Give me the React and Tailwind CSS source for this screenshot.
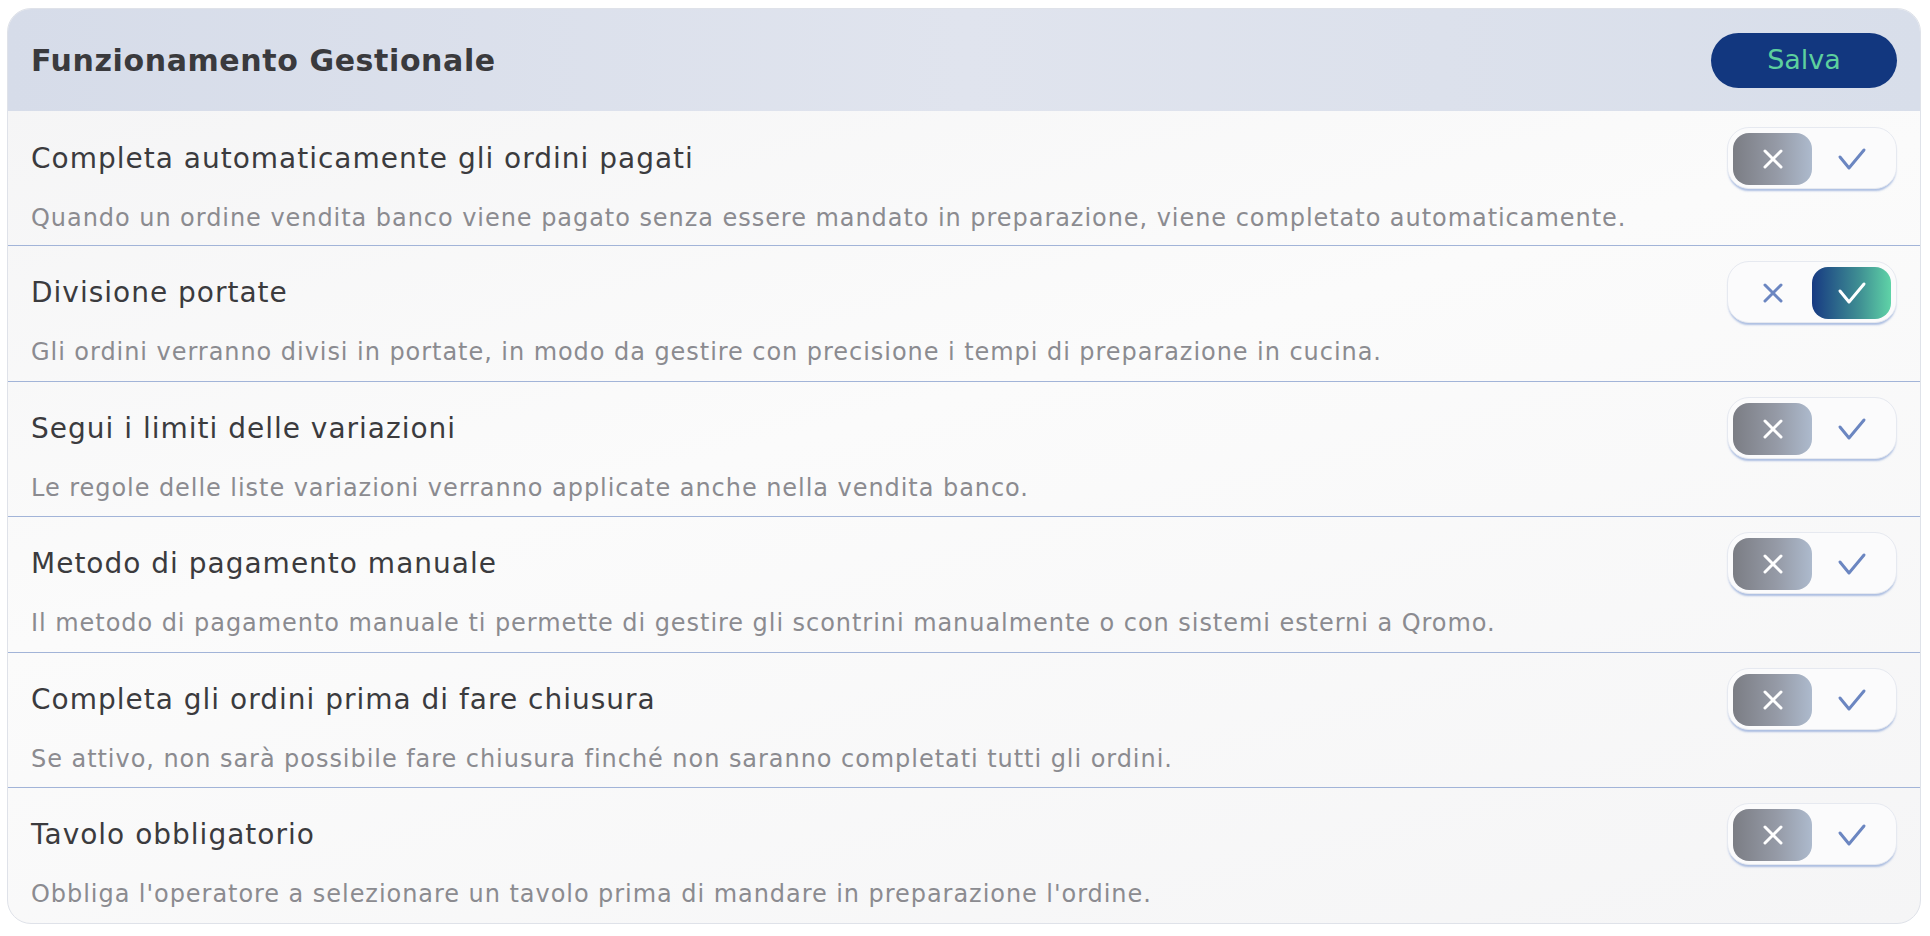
import React from 'react';

const settings = [
  {
    title: 'Completa automaticamente gli ordini pagati',
    desc: 'Quando un ordine vendita banco viene pagato senza essere mandato in preparazione, viene completato automaticamente.',
    on: false,
  },
  {
    title: 'Divisione portate',
    desc: 'Gli ordini verranno divisi in portate, in modo da gestire con precisione i tempi di preparazione in cucina.',
    on: true,
  },
  {
    title: 'Segui i limiti delle variazioni',
    desc: 'Le regole delle liste variazioni verranno applicate anche nella vendita banco.',
    on: false,
  },
  {
    title: 'Metodo di pagamento manuale',
    desc: 'Il metodo di pagamento manuale ti permette di gestire gli scontrini manualmente o con sistemi esterni a Qromo.',
    on: false,
  },
  {
    title: 'Completa gli ordini prima di fare chiusura',
    desc: 'Se attivo, non sarà possibile fare chiusura finché non saranno completati tutti gli ordini.',
    on: false,
  },
  {
    title: 'Tavolo obbligatorio',
    desc: "Obbliga l'operatore a selezionare un tavolo prima di mandare in preparazione l'ordine.",
    on: false,
  },
];

const XIcon = ({ color }) => (
  <svg width="22" height="22" viewBox="0 0 22 22" fill="none">
    <path d="M3 3 L19 19 M19 3 L3 19" stroke={color} strokeWidth="3" strokeLinecap="round" />
  </svg>
);

const CheckIcon = ({ color }) => (
  <svg width="30" height="24" viewBox="0 0 30 24" fill="none">
    <path d="M3 10 L12 21 L27 3" stroke={color} strokeWidth="3" strokeLinecap="round" strokeLinejoin="round" />
  </svg>
);

const Toggle = ({ on }) => (
  <div className="flex w-[170px] h-[62px] p-[5px] rounded-[22px] bg-[#fbfbfc] border border-[#e6e9f0] shadow-[0_3px_2px_-1px_rgba(140,165,215,0.7)]">
    {on ? (
      <>
        <div className="flex w-[80px] h-[52px] items-center justify-center">
          <XIcon color="#6b86c1" />
        </div>
        <div className="flex w-[80px] h-[52px] items-center justify-center rounded-[16px] bg-[linear-gradient(90deg,#173a82,#3f8f93_60%,#5fd3a7)]">
          <CheckIcon color="#ffffff" />
        </div>
      </>
    ) : (
      <>
        <div className="flex w-[80px] h-[52px] items-center justify-center rounded-[16px] bg-[linear-gradient(90deg,#7b7d84,#959aa6_55%,#adbacd)]">
          <XIcon color="#ffffff" />
        </div>
        <div className="flex w-[80px] h-[52px] items-center justify-center">
          <CheckIcon color="#6b86c1" />
        </div>
      </>
    )}
  </div>
);

export default function App() {
  return (
    <div className="min-h-screen bg-white pl-[7px] pr-[9px] pt-[8px] font-['DejaVu_Sans',sans-serif]">
      <div className="rounded-[24px] border border-[#dfe2e9] overflow-hidden bg-[linear-gradient(165deg,#f4f4f5,#fbfbfb_45%,#f5f5f6)]">
        {/* Header */}
        <div className="flex items-center justify-between h-[102px] px-[23px] bg-[linear-gradient(90deg,#d6dce9,#e0e4ee_50%,#d8deea)]">
          <h1 className="text-[30px] font-bold text-[#3a3a3d] tracking-[0.6px]">Funzionamento Gestionale</h1>
          <button className="w-[186px] h-[55px] rounded-full bg-[#12377f] text-[#5dd09e] text-[27px]">
            Salva
          </button>
        </div>

        {settings.map((s, i) => (
          <div
            key={s.title}
            className={`flex justify-between items-start px-[23px] ${i > 0 ? 'h-[135.5px] border-t border-[#a2b4d8]' : 'h-[134px]'}`}
          >
            <div className={i > 0 ? 'pt-[29px]' : 'pt-[30px]'}>
              <div className="text-[28px] leading-[36px] tracking-[1px] text-[#3b3b3e]">{s.title}</div>
              <div className="mt-[26px] text-[24px] leading-[30px] tracking-[0.95px] text-[#8b8b90]">{s.desc}</div>
            </div>
            <div className={i > 0 ? 'mt-[15px]' : 'mt-[16px]'}>
              <Toggle on={s.on} />
            </div>
          </div>
        ))}
      </div>
    </div>
  );
}
